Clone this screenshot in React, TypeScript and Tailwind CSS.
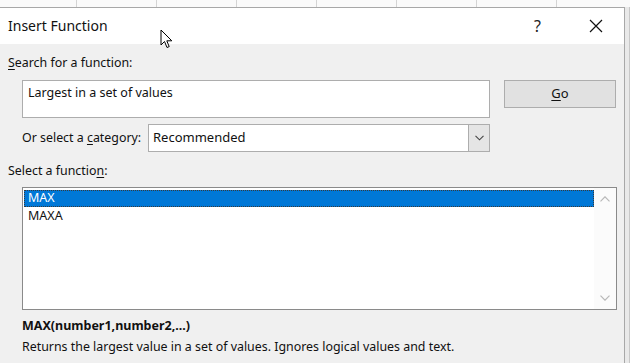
import React from "react";

const font = { fontFamily: '"Noto Sans", "Open Sans", sans-serif' };

function Cursor() {
  return (
    <svg className="absolute left-[160px] top-[29px]" width="14" height="21" viewBox="0 0 14 21">
      <path d="M1 1 L1 16 L4.5 12.5 L7 18.5 L9.2 17.6 L6.8 11.8 L11.8 11.8 Z" fill="#fff" stroke="#000" strokeWidth="1" strokeLinejoin="miter" />
    </svg>
  );
}

export default function App() {
  return (
    <div className="relative w-[630px] h-[363px] overflow-hidden bg-[#f0f0f0] flex flex-col text-[#000]" style={font}>
      {/* spreadsheet strip on top */}
      <div className="h-[7px] flex bg-[#fafafa] shrink-0">
        <div className="w-[77px] border-r border-[#d4d4d4]" />
        <div className="w-[80px] border-r border-[#d4d4d4]" />
        <div className="w-[80px] border-r border-[#d4d4d4]" />
        <div className="w-[80px] border-r border-[#d4d4d4]" />
        <div className="w-[80px] border-r border-[#d4d4d4]" />
        <div className="w-[80px] border-r border-[#d4d4d4]" />
        <div className="w-[80px] border-r border-[#d4d4d4]" />
        <div className="flex-1" />
      </div>
      <div className="flex flex-1 min-h-0">
        {/* dialog */}
        <div className="w-[625px] flex flex-col border-t border-r border-[#a8a8a8] bg-[#f0f0f0]">
          <div className="h-[36px] bg-white flex items-center shrink-0">
            <span className="ml-[8px] text-[14px] leading-none text-[#111]">Insert Function</span>
            <span className="ml-auto text-[16px] leading-none text-[#222] mr-[48px]">?</span>
            <svg className="mr-[21px]" width="14" height="14" viewBox="0 0 14 14">
              <path d="M1 1 L13 13 M13 1 L1 13" stroke="#111" strokeWidth="1.2" />
            </svg>
          </div>
          <div className="flex flex-col flex-1 px-[8px] pt-[10px]">
            <div className="text-[12.4px] leading-[17px] text-[#111]">
              <span className="underline underline-offset-2">S</span>earch for a function:
            </div>
            <div className="flex mt-[9px] pl-[14px]">
              <div className="w-[468px] h-[38px] bg-white border border-[#adadad] text-[12.5px] leading-none pl-[5px] pt-[6px] text-[#111]">
                Largest in a set of values
              </div>
              <div className="ml-[14px] w-[112px] h-[28px] bg-[#e1e1e1] border border-[#adadad] flex items-center justify-center text-[13px] text-[#111]">
                <span className="underline underline-offset-2">G</span>o
              </div>
            </div>
            <div className="flex items-center mt-[6px] pl-[14px]">
              <span className="w-[126px] text-[12.4px] leading-none text-[#111]">
                Or select a <span className="underline underline-offset-2">c</span>ategory:
              </span>
              <div className="w-[342px] h-[28px] bg-white border border-[#adadad] flex items-stretch">
                <div className="flex-1 flex items-center pl-[4px] text-[13px] text-[#111]">Recommended</div>
                <div className="w-[21px] bg-[#e5e5e5] border-l border-[#adadad] flex items-center justify-center">
                  <svg width="9" height="6" viewBox="0 0 9 6">
                    <path d="M0.5 0.8 L4.5 4.8 L8.5 0.8" stroke="#444" strokeWidth="1.1" fill="none" />
                  </svg>
                </div>
              </div>
            </div>
            <div className="text-[12.4px] leading-[17px] mt-[10px] text-[#111]">
              Select a functio<span className="underline underline-offset-2">n</span>:
            </div>
            <div className="ml-[14px] mt-[8px] w-[595px] h-[123px] bg-white border border-[#8a8a8a] flex">
              <div className="flex-1 pt-[2px] pl-[1px]">
                <div className="h-[17px] bg-[#0078d7] border border-dotted border-[#3a3a3a] flex items-center pl-[3px] text-[12.5px] text-white leading-none">
                  MAX
                </div>
                <div className="h-[18px] flex items-center pl-[4px] text-[12.5px] text-[#111] leading-none">MAXA</div>
              </div>
              <div className="w-[22px] bg-[#fbfbfb] flex flex-col items-center justify-between py-[8px]">
                <svg width="10" height="6" viewBox="0 0 10 6">
                  <path d="M0.5 5.3 L5 0.8 L9.5 5.3" stroke="#b8b8b8" strokeWidth="1.2" fill="none" />
                </svg>
                <svg width="10" height="6" viewBox="0 0 10 6">
                  <path d="M0.5 0.7 L5 5.2 L9.5 0.7" stroke="#b8b8b8" strokeWidth="1.2" fill="none" />
                </svg>
              </div>
            </div>
            <div className="ml-[14px] mt-[7px] text-[12.5px] font-bold leading-[17px] text-[#111]">MAX(number1,number2,...)</div>
            <div className="ml-[14px] mt-[4px] text-[12.4px] leading-[17px] text-[#111]">
              Returns the largest value in a set of values. Ignores logical values and text.
            </div>
          </div>
        </div>
        <div className="flex-1 bg-[#e9e9e9] border-r border-[#c8c8c8]" />
      </div>
      <Cursor />
    </div>
  );
}
